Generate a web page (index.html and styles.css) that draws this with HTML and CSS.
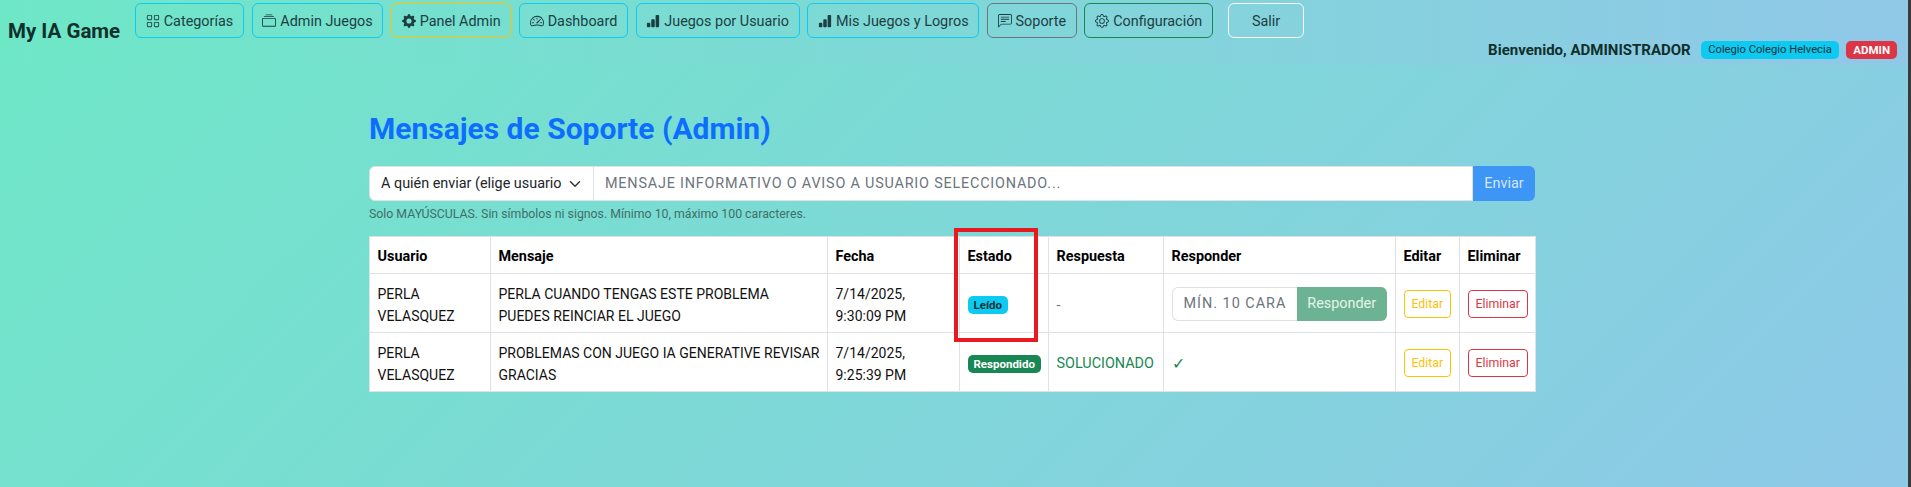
FILE: index.html
```html
<!DOCTYPE html>
<html lang="es">
<head>
<meta charset="utf-8">
<title>Mensajes de Soporte</title>
<link rel="stylesheet" href="styles.css">
</head>
<body>
<nav class="topbar">
  <span class="brand">My IA Game</span>
  <div class="links">
    <a class="btn-nav info"><svg class="ico" viewBox="0 0 16 16"><path d="M1 2.5A1.5 1.5 0 0 1 2.5 1h3A1.5 1.5 0 0 1 7 2.5v3A1.5 1.5 0 0 1 5.5 7h-3A1.5 1.5 0 0 1 1 5.5v-3zM2.5 2a.5.5 0 0 0-.5.5v3a.5.5 0 0 0 .5.5h3a.5.5 0 0 0 .5-.5v-3a.5.5 0 0 0-.5-.5h-3zm6.5.5A1.5 1.5 0 0 1 10.5 1h3A1.5 1.5 0 0 1 15 2.5v3A1.5 1.5 0 0 1 13.5 7h-3A1.5 1.5 0 0 1 9 5.5v-3zm1.5-.5a.5.5 0 0 0-.5.5v3a.5.5 0 0 0 .5.5h3a.5.5 0 0 0 .5-.5v-3a.5.5 0 0 0-.5-.5h-3zM1 10.5A1.5 1.5 0 0 1 2.5 9h3A1.5 1.5 0 0 1 7 10.5v3A1.5 1.5 0 0 1 5.5 15h-3A1.5 1.5 0 0 1 1 13.5v-3zm1.5-.5a.5.5 0 0 0-.5.5v3a.5.5 0 0 0 .5.5h3a.5.5 0 0 0 .5-.5v-3a.5.5 0 0 0-.5-.5h-3zm6.5.5A1.5 1.5 0 0 1 10.5 9h3a1.5 1.5 0 0 1 1.5 1.5v3a1.5 1.5 0 0 1-1.5 1.5h-3A1.5 1.5 0 0 1 9 13.5v-3zm1.5-.5a.5.5 0 0 0-.5.5v3a.5.5 0 0 0 .5.5h3a.5.5 0 0 0 .5-.5v-3a.5.5 0 0 0-.5-.5h-3z"/></svg>Categorías</a>
    <a class="btn-nav info"><svg class="ico" viewBox="0 0 16 16"><path d="M2.5 3.5a.5.5 0 0 1 0-1h11a.5.5 0 0 1 0 1h-11zm2-2a.5.5 0 0 1 0-1h7a.5.5 0 0 1 0 1h-7zM0 13a1.5 1.5 0 0 0 1.5 1.5h13A1.5 1.5 0 0 0 16 13V6a1.5 1.5 0 0 0-1.5-1.5h-13A1.5 1.5 0 0 0 0 6v7zm1.5.5A.5.5 0 0 1 1 13V6a.5.5 0 0 1 .5-.5h13a.5.5 0 0 1 .5.5v7a.5.5 0 0 1-.5.5h-13z"/></svg>Admin Juegos</a>
    <a class="btn-nav warn"><svg class="ico" viewBox="0 0 16 16"><path d="M9.405 1.05c-.413-1.4-2.397-1.4-2.81 0l-.1.34a1.464 1.464 0 0 1-2.105.872l-.31-.17c-1.283-.698-2.686.705-1.987 1.987l.169.311c.446.82.023 1.841-.872 2.105l-.34.1c-1.4.413-1.4 2.397 0 2.81l.34.1a1.464 1.464 0 0 1 .872 2.105l-.17.31c-.698 1.283.705 2.686 1.987 1.987l.311-.169a1.464 1.464 0 0 1 2.105.872l.1.34c.413 1.4 2.397 1.4 2.81 0l.1-.34a1.464 1.464 0 0 1 2.105-.872l.31.17c1.283.698 2.686-.705 1.987-1.987l-.169-.311a1.464 1.464 0 0 1 .872-2.105l.34-.1c1.4-.413 1.4-2.397 0-2.81l-.34-.1a1.464 1.464 0 0 1-.872-2.105l.17-.31c.698-1.283-.705-2.686-1.987-1.987l-.311.169a1.464 1.464 0 0 1-2.105-.872l-.1-.34zM8 10.93a2.929 2.929 0 1 1 0-5.86 2.929 2.929 0 0 1 0 5.858z"/></svg>Panel Admin</a>
    <a class="btn-nav info"><svg class="ico" viewBox="0 0 16 16"><path d="M8 4a.5.5 0 0 1 .5.5V6a.5.5 0 0 1-1 0V4.5A.5.5 0 0 1 8 4zM3.732 5.732a.5.5 0 0 1 .707 0l.915.914a.5.5 0 1 1-.708.708l-.914-.915a.5.5 0 0 1 0-.707zM2 10a.5.5 0 0 1 .5-.5h1.586a.5.5 0 0 1 0 1H2.5A.5.5 0 0 1 2 10zm9.5 0a.5.5 0 0 1 .5-.5h1.5a.5.5 0 0 1 0 1H12a.5.5 0 0 1-.5-.5zm.754-4.246a.389.389 0 0 0-.527-.02L7.547 9.31a.91.91 0 1 0 1.302 1.258l3.434-4.297a.389.389 0 0 0-.029-.518z"/><path d="M0 10a8 8 0 1 1 15.547 2.661c-.442 1.253-1.845 1.591-2.932 1.253C11.309 13.488 9.475 13 8 13c-1.474 0-3.31.488-4.615.914-1.087.338-2.49 0-2.932-1.253A7.988 7.988 0 0 1 0 10zm8-7a7 7 0 0 0-6.603 9.329c.203.575.923.876 1.68.63C4.397 12.533 6.358 12 8 12s3.604.532 4.923.96c.757.245 1.477-.056 1.68-.631A7 7 0 0 0 8 3z"/></svg>Dashboard</a>
    <a class="btn-nav info"><svg class="ico" viewBox="0 0 16 16"><path d="M1 11a1 1 0 0 1 1-1h2a1 1 0 0 1 1 1v3a1 1 0 0 1-1 1H2a1 1 0 0 1-1-1v-3zm5-4a1 1 0 0 1 1-1h2a1 1 0 0 1 1 1v7a1 1 0 0 1-1 1H7a1 1 0 0 1-1-1V7zm5-5a1 1 0 0 1 1-1h2a1 1 0 0 1 1 1v12a1 1 0 0 1-1 1h-2a1 1 0 0 1-1-1V2z"/></svg>Juegos por Usuario</a>
    <a class="btn-nav info"><svg class="ico" viewBox="0 0 16 16"><path d="M1 11a1 1 0 0 1 1-1h2a1 1 0 0 1 1 1v3a1 1 0 0 1-1 1H2a1 1 0 0 1-1-1v-3zm5-4a1 1 0 0 1 1-1h2a1 1 0 0 1 1 1v7a1 1 0 0 1-1 1H7a1 1 0 0 1-1-1V7zm5-5a1 1 0 0 1 1-1h2a1 1 0 0 1 1 1v12a1 1 0 0 1-1 1h-2a1 1 0 0 1-1-1V2z"/></svg>Mis Juegos y Logros</a>
    <a class="btn-nav gray"><svg class="ico" viewBox="0 0 16 16"><path d="M14 1a1 1 0 0 1 1 1v8a1 1 0 0 1-1 1H4.414A2 2 0 0 0 3 11.586l-2 2V2a1 1 0 0 1 1-1h12zM2 0a2 2 0 0 0-2 2v12.793a.5.5 0 0 0 .854.353l2.853-2.853A1 1 0 0 1 4.414 12H14a2 2 0 0 0 2-2V2a2 2 0 0 0-2-2H2z"/><path d="M3 3.5a.5.5 0 0 1 .5-.5h9a.5.5 0 0 1 0 1h-9a.5.5 0 0 1-.5-.5zM3 6a.5.5 0 0 1 .5-.5h9a.5.5 0 0 1 0 1h-9A.5.5 0 0 1 3 6zm0 2.5a.5.5 0 0 1 .5-.5h5a.5.5 0 0 1 0 1h-5a.5.5 0 0 1-.5-.5z"/></svg>Soporte</a>
    <a class="btn-nav green"><svg class="ico" viewBox="0 0 16 16"><path d="M8 4.754a3.246 3.246 0 1 0 0 6.492 3.246 3.246 0 0 0 0-6.492zM5.754 8a2.246 2.246 0 1 1 4.492 0 2.246 2.246 0 0 1-4.492 0z"/><path d="M9.796 1.343c-.527-1.79-3.065-1.79-3.592 0l-.094.319a.873.873 0 0 1-1.255.52l-.292-.16c-1.64-.892-3.433.902-2.54 2.541l.159.292a.873.873 0 0 1-.52 1.255l-.319.094c-1.79.527-1.79 3.065 0 3.592l.319.094a.873.873 0 0 1 .52 1.255l-.16.292c-.892 1.64.901 3.434 2.541 2.54l.292-.159a.873.873 0 0 1 1.255.52l.094.319c.527 1.79 3.065 1.79 3.592 0l.094-.319a.873.873 0 0 1 1.255-.52l.292.16c1.64.893 3.434-.902 2.54-2.541l-.159-.292a.873.873 0 0 1 .52-1.255l.319-.094c1.79-.527 1.79-3.065 0-3.592l-.319-.094a.873.873 0 0 1-.52-1.255l.16-.292c.893-1.64-.902-3.433-2.541-2.54l-.292.159a.873.873 0 0 1-1.255-.52l-.094-.319zm-2.633.283c.246-.835 1.428-.835 1.674 0l.094.319a1.873 1.873 0 0 0 2.693 1.115l.291-.16c.764-.415 1.6.42 1.184 1.185l-.159.292a1.873 1.873 0 0 0 1.116 2.692l.318.094c.835.246.835 1.428 0 1.674l-.319.094a1.873 1.873 0 0 0-1.115 2.693l.16.291c.415.764-.42 1.6-1.185 1.184l-.291-.159a1.873 1.873 0 0 0-2.693 1.116l-.094.318c-.246.835-1.428.835-1.674 0l-.094-.319a1.873 1.873 0 0 0-2.692-1.115l-.292.16c-.764.415-1.6-.42-1.184-1.185l.159-.291A1.873 1.873 0 0 0 1.945 8.93l-.319-.094c-.835-.246-.835-1.428 0-1.674l.319-.094A1.873 1.873 0 0 0 3.06 4.377l-.16-.292c-.415-.764.42-1.6 1.185-1.184l.292.159a1.873 1.873 0 0 0 2.692-1.115l.094-.319z"/></svg>Configuración</a>
    <a class="btn-nav light">Salir</a>
  </div>
  <div class="user">
    <span class="welcome">Bienvenido, ADMINISTRADOR</span>
    <span class="badge badge-info">Colegio Colegio Helvecia</span>
    <span class="badge badge-danger">ADMIN</span>
  </div>
</nav>
<main class="content">
  <h1 class="title">Mensajes de Soporte (Admin)</h1>
  <form class="send">
    <div class="select">A quién enviar (elige usuario<svg class="chev" viewBox="0 0 16 16"><path fill="none" stroke="#343a40" stroke-linecap="round" stroke-linejoin="round" stroke-width="2" d="m2 5 6 6 6-6"/></svg></div>
    <div class="field">MENSAJE INFORMATIVO O AVISO A USUARIO SELECCIONADO...</div>
    <button class="send-btn" type="button">Enviar</button>
  </form>
  <p class="hint">Solo MAYÚSCULAS. Sin símbolos ni signos. Mínimo 10, máximo 100 caracteres.</p>
  <table class="grid-table">
    <colgroup>
      <col class="c-user"><col class="c-msg"><col class="c-date"><col class="c-state"><col class="c-answer"><col class="c-reply"><col class="c-edit"><col class="c-del">
    </colgroup>
    <thead>
      <tr><th>Usuario</th><th>Mensaje</th><th>Fecha</th><th>Estado</th><th>Respuesta</th><th>Responder</th><th>Editar</th><th>Eliminar</th></tr>
    </thead>
    <tbody>
      <tr>
        <td>PERLA VELASQUEZ</td>
        <td class="msg">PERLA CUANDO TENGAS ESTE PROBLEMA<br>PUEDES REINCIAR EL JUEGO</td>
        <td>7/14/2025, 9:30:09 PM</td>
        <td><span class="pill pill-info">Leído</span></td>
        <td class="muted">-</td>
        <td class="ctl">
          <div class="reply">
            <div class="reply-field"><span class="reply-clip">MÍN. 10 CARACTERES</span></div>
            <button class="reply-btn" type="button">Responder</button>
          </div>
        </td>
        <td class="ctl"><button class="act act-edit" type="button">Editar</button></td>
        <td class="ctl"><button class="act act-del" type="button">Eliminar</button></td>
      </tr>
      <tr>
        <td>PERLA VELASQUEZ</td>
        <td class="msg">PROBLEMAS CON JUEGO IA GENERATIVE REVISAR GRACIAS</td>
        <td>7/14/2025, 9:25:39 PM</td>
        <td><span class="pill pill-green">Respondido</span></td>
        <td class="ok">SOLUCIONADO</td>
        <td class="ok mark">✓</td>
        <td class="ctl"><button class="act act-edit" type="button">Editar</button></td>
        <td class="ctl"><button class="act act-del" type="button">Eliminar</button></td>
      </tr>
    </tbody>
  </table>
  <div class="callout"></div>
</main>
</body>
</html>
```

FILE: styles.css
```css
* { box-sizing: border-box; }
html { height: 100%; background: #3a3a3a; overflow: hidden; }
body {
  margin: 0;
  width: calc(100% - 3px);
  height: 100%;
  min-height: 487px;
  font-family: Roboto, "Noto Sans", "Liberation Sans", sans-serif;
  font-size: 14.4px;
  line-height: 1.5;
  color: #212529;
  background: linear-gradient(135deg, #6ee7c7 0%, #8ec9e8 100%);
}
.topbar {
  height: 65px;
  display: flex;
  align-items: flex-start;
  padding: 3px 11px 0 8px;
  background: linear-gradient(90deg, #6ee7c7 0%, #90c8e8 100%);
}
.brand {
  margin-top: 13px;
  width: 127px;
  flex: none;
  font-size: 20.5px;
  font-weight: 700;
  line-height: 30px;
  color: #10302c;
}
.links { display: flex; gap: 7.5px; }
.btn-nav {
  display: flex;
  align-items: center;
  justify-content: center;
  gap: 4px;
  height: 35px;
  padding: 2px 9.75px 0;
  border: 1px solid;
  border-radius: 6px;
  white-space: nowrap;
  color: #1d3f43;
}
.info { border-color: #0dcaf0; }
.warn { border-color: #ffc107; }
.gray { border-color: #6c757d; }
.green { border-color: #198754; }
.light { border-color: #f8f9fa; width: 76px; margin-left: 7.5px; }
.ico { width: 14px; height: 14px; fill: currentColor; flex: none; margin-top: -2px; }
.user {
  margin-left: auto;
  margin-top: 38px;
  height: 18px;
  display: flex;
  align-items: center;
  gap: 7.5px;
}
.welcome { font-size: 15px; font-weight: 700; line-height: 18px; color: #10302c; margin-right: 3px; }
.badge {
  display: block;
  height: 18px;
  padding: 0 7px;
  border-radius: 5px;
  font-size: 11.2px;
  line-height: 18px;
}
.badge-info { background: #0dcaf0; color: #10303a; }
.badge-danger { background: #dc3545; color: #fff; font-weight: 700; font-size: 11.5px; }
.content {
  position: relative;
  width: 1166px;
  margin-left: 369px;
  padding-top: 44px;
}
.title {
  margin: 0;
  font-size: 30px;
  font-weight: 700;
  line-height: 40px;
  color: #0d6efd;
}
.send { display: flex; height: 35px; margin-top: 17px; }
.select {
  width: 225px;
  display: flex;
  align-items: center;
  justify-content: space-between;
  padding: 0 12px 0 11px;
  background: #fff;
  border: 1px solid #dee2e6;
  border-radius: 6px 0 0 6px;
  white-space: nowrap;
}
.chev { width: 12px; height: 12px; flex: none; }
.field {
  flex: 1;
  display: flex;
  align-items: center;
  padding: 0 11px;
  background: #fff;
  border: 1px solid #dee2e6;
  border-left: 0;
  letter-spacing: 0.8px;
  color: #6c757d;
}
.send-btn {
  width: 62px;
  border: 0;
  border-radius: 0 6px 6px 0;
  background: #3d95f5;
  color: #d4e6fb;
  font: inherit;
}
.hint { margin: 3px 0 0; font-size: 12.3px; line-height: 20px; color: #3f6f68; }
.grid-table {
  width: 1166px;
  margin-top: 12px;
  table-layout: fixed;
  border-collapse: collapse;
  background: #fff;
  color: #111;
}
.c-user { width: 121px; }
.c-msg { width: 337px; }
.c-date { width: 132px; }
.c-state { width: 89px; }
.c-answer { width: 115px; }
.c-reply { width: 232px; }
.c-edit { width: 64px; }
.c-del { width: 76px; }
.grid-table th, .grid-table td {
  border: 1px solid #dee2e6;
  padding: 9px 8px 5px 7.5px;
  font-size: 14px;
  line-height: 22px;
  text-align: left;
  vertical-align: middle;
}
.grid-table th { font-size: 14.4px; font-weight: 700; color: #000; }
.grid-table .msg { padding-right: 0; }
.grid-table .ctl { padding-top: 8px; padding-bottom: 6px; }
.muted { color: #6c757d; }
.grid-table .ok { color: #198754; font-size: 14.4px; }
.grid-table .mark { font-size: 16px; }
.pill {
  display: block;
  width: fit-content;
  height: 18px;
  padding: 0 6px;
  border-radius: 5px;
  font-size: 11.5px;
  font-weight: 700;
  line-height: 18px;
  white-space: nowrap;
}
.pill-info { background: #0dcaf0; color: #10303a; }
.pill-green { background: #198754; color: #fff; }
.reply { display: flex; height: 34px; font-size: 14.4px; }
.reply-field {
  width: 125px;
  padding: 0 11px;
  border: 1px solid #dee2e6;
  border-right: 0;
  border-radius: 6px 0 0 6px;
  line-height: 32px;
  color: #6c757d;
}
.reply-clip {
  display: block;
  overflow: hidden;
  white-space: nowrap;
  letter-spacing: 1px;
}
.reply-btn {
  flex: 1;
  border: 0;
  padding: 0;
  border-radius: 0 6px 6px 0;
  background: #6bb392;
  color: #e6f3ed;
  font: inherit;
}
.act {
  display: block;
  height: 28px;
  padding: 0 7px;
  border: 1px solid;
  border-radius: 4px;
  background: transparent;
  font: inherit;
  font-size: 12.3px;
}
.act-edit { color: #ffc107; border-color: #ffc107; }
.act-del { color: #dc3545; border-color: #dc3545; }
.callout {
  position: absolute;
  left: 585px;
  top: 163px;
  width: 84px;
  height: 114px;
  border: 4px solid #e8191f;
}
```
